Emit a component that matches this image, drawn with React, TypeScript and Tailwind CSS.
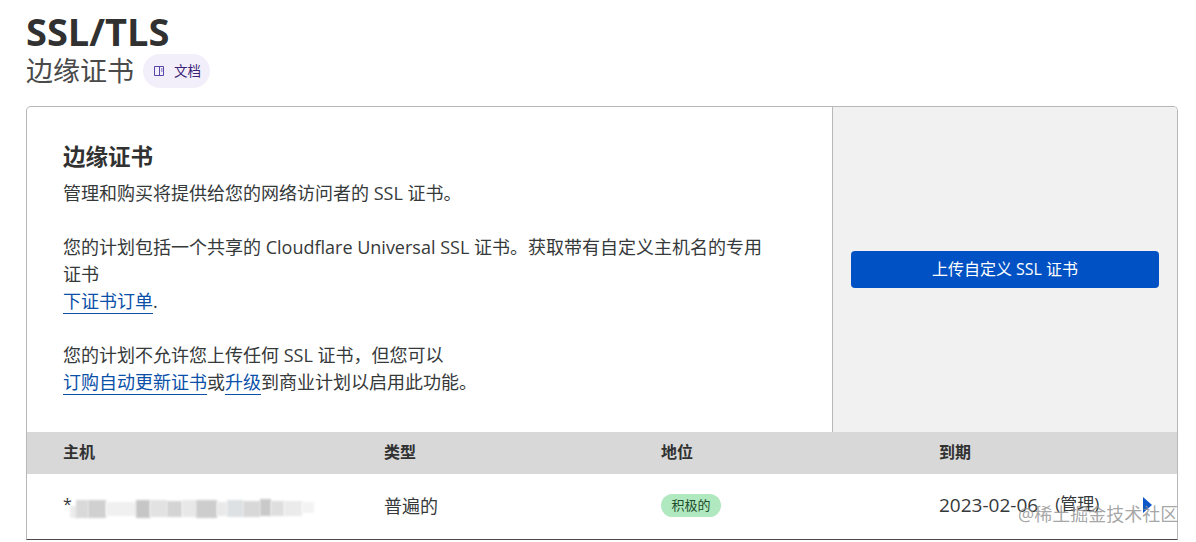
const F = "font-['Open_Sans','Noto_Sans_CJK_SC',sans-serif]";
function Link({ children }: { children: React.ReactNode }) {
  return <span className="text-[#0a50a8] border-b border-[#0a50a8] leading-[24px] inline-block">{children}</span>;
}
const blurs = [
  [70, 506, 8, 12, "#ececec"],
  [76, 500, 12, 18, "#d9d9d9"],
  [88, 500, 18, 18, "#d0d0d0"],
  [106, 502, 30, 14, "#f0f0f0"],
  [136, 500, 14, 18, "#c6c6c6"],
  [150, 500, 17, 17, "#e2e2e2"],
  [167, 501, 15, 16, "#d4d4d4"],
  [182, 500, 14, 17, "#e8e8e8"],
  [196, 500, 21, 18, "#cdcdcd"],
  [217, 502, 10, 14, "#e9e9e9"],
  [227, 500, 16, 17, "#dde1e3"],
  [243, 501, 17, 16, "#d8d8d8"],
  [260, 499, 11, 17, "#c9c9c9"],
  [271, 501, 13, 15, "#dedede"],
  [284, 501, 18, 15, "#ebebeb"],
  [302, 502, 12, 11, "#f3f3f3"],
] as const;
export default function App() {
  return (
    <div className={`relative w-[1196px] h-[542px] overflow-hidden bg-white text-[#36393a] ${F}`}>
      <div className="pl-[26px] pr-[18px] pt-[8px]">
        <h1 className="text-[38px] leading-[46px] font-bold text-[#313131]">SSL/TLS</h1>
        <div className="flex items-center gap-[9px] h-[34px]">
          <span className="text-[27px] leading-[34px] text-[#4a4a4a]">边缘证书</span>
          <span className="flex items-center gap-[9px] h-[34px] w-[67px] pl-[10px] rounded-full bg-[#f2effa] text-[13.5px] text-[#3b1f78]">
            <svg width="12" height="12" viewBox="0 0 12 12" fill="none" stroke="#5b45a8" strokeWidth="1" className="shrink-0"><path d="M1.5 1.5h9v9h-9zM6.5 1.5v9M8 4h1.5M8 6h1.5" /></svg>
            文档
          </span>
        </div>
        <div className="mt-[18px] border border-[#b8b8b8] rounded-t-[5px] overflow-hidden border-b-[#4a4a4a]">
          <div className="flex h-[325px]">
            <div className="w-[805px] pl-[36px] pt-[36px] text-[18px] leading-[27px]">
              <h2 className="text-[22.5px] leading-[28px] font-bold text-[#313131] mb-[9px]">边缘证书</h2>
              <p>管理和购买将提供给您的网络访问者的 SSL 证书。</p>
              <p className="mt-[27px] w-[710px]">您的计划包括一个共享的 Cloudflare Universal SSL 证书。获取带有自定义主机名的专用证书</p>
              <p><Link>下证书订单</Link>.</p>
              <p className="mt-[27px]">您的计划不允许您上传任何 SSL 证书，但您可以</p>
              <p><Link>订购自动更新证书</Link>或<Link>升级</Link>到商业计划以启用此功能。</p>
            </div>
            <div className="flex-1 bg-[#f1f1f1] border-l border-[#b8b8b8] flex items-center justify-center">
              <button className="w-[308px] h-[37px] rounded-[4px] bg-[#0051c3] text-white text-[16px] pb-[2px]">上传自定义 SSL 证书</button>
            </div>
          </div>
          <div className="grid grid-cols-[321px_277px_278px_1fr] h-[42px] items-center bg-[#d8d8d8] text-[16px] font-bold pl-[36px] text-[#313131] pb-[2px]">
            <span>主机</span><span>类型</span><span>地位</span><span>到期</span>
          </div>
          <div className="grid grid-cols-[321px_277px_278px_1fr] h-[65px] items-center text-[18px] pl-[36px]">
            <span className="pb-[6px] text-[16px]">*</span>
            <span className="pb-[1px]">普遍的</span>
            <span className="pb-[2px] flex"><span className="flex items-center justify-center w-[60px] h-[23px] rounded-full bg-[#b0e8bf] text-[13px] text-[#1d4d2c]">积极的</span></span>
            <span className="flex items-center whitespace-nowrap pb-[3px] text-[19px]">
              2023-02-06
              <span className="text-[17px] ml-[17px] pb-[3px]">(管理)</span>
              <svg width="9" height="16" viewBox="0 0 9 16" className="ml-[44px]"><path d="M0 0l9 8-9 8z" fill="#0b57c9" /></svg>
            </span>
          </div>
        </div>
      </div>
      {blurs.map(([x, y, w, h, c], i) => (
        <div key={i} className="absolute blur-[1px]" style={{ left: x, top: y, width: w, height: h, background: c }} />
      ))}
      <span className="absolute left-[1018px] top-[503px] text-[18px] leading-[22px] text-[#8f8f8f]/80 whitespace-nowrap">@稀土掘金技术社区</span>
    </div>
  );
}
